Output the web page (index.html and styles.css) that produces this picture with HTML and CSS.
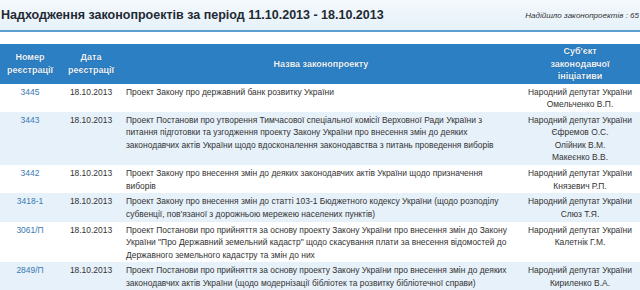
FILE: index.html
```html
<!DOCTYPE html>
<html lang="uk">
<head>
<meta charset="utf-8">
<title>Надходження законопроектів</title>
<link rel="stylesheet" href="styles.css">
</head>
<body>
<div class="page">
  <div class="titlebar">
    <h1 class="title">Надходження законопроектів за період 11.10.2013 - 18.10.2013</h1>
    <div class="count">Надійшло законопроектів : 65</div>
  </div>
  <table class="bills">
    <colgroup>
      <col class="c-num"><col class="c-date"><col class="c-name"><col class="c-subj">
    </colgroup>
    <thead>
      <tr>
        <th>Номер<br>реєстрації</th>
        <th>Дата<br>реєстрації</th>
        <th>Назва законопроекту</th>
        <th>Суб'єкт<br>законодавчої<br>ініціативи</th>
      </tr>
    </thead>
    <tbody>
      <tr>
        <td class="num"><a href="#">3445</a></td>
        <td class="date">18.10.2013</td>
        <td class="name">Проект Закону про державний банк розвитку України</td>
        <td class="subj">Народний депутат України<br>Омельченко В.П.</td>
      </tr>
      <tr class="alt">
        <td class="num"><a href="#">3443</a></td>
        <td class="date">18.10.2013</td>
        <td class="name">Проект Постанови про утворення Тимчасової спеціальної комісії Верховної Ради України з<br>питання підготовки та узгодження проекту Закону України про внесення змін до деяких<br>законодавчих актів України щодо вдосконалення законодавства з питань проведення виборів</td>
        <td class="subj">Народний депутат України<br>Єфремов О.С.<br>Олійник В.М.<br>Макеєнко В.В.</td>
      </tr>
      <tr>
        <td class="num"><a href="#">3442</a></td>
        <td class="date">18.10.2013</td>
        <td class="name">Проект Закону про внесення змін до деяких законодавчих актів України щодо призначення<br>виборів</td>
        <td class="subj">Народний депутат України<br>Князевич Р.П.</td>
      </tr>
      <tr class="alt">
        <td class="num"><a href="#">3418-1</a></td>
        <td class="date">18.10.2013</td>
        <td class="name">Проект Закону про внесення змін до статті 103-1 Бюджетного кодексу України (щодо розподілу<br>субвенції, пов'язаної з дорожньою мережею населених пунктів)</td>
        <td class="subj">Народний депутат України<br>Слюз Т.Я.</td>
      </tr>
      <tr>
        <td class="num"><a href="#">3061/П</a></td>
        <td class="date">18.10.2013</td>
        <td class="name">Проект Постанови про прийняття за основу проекту Закону України про внесення змін до Закону<br>України "Про Державний земельний кадастр" щодо скасування плати за внесення відомостей до<br>Державного земельного кадастру та змін до них</td>
        <td class="subj">Народний депутат України<br>Калетнік Г.М.</td>
      </tr>
      <tr class="alt">
        <td class="num"><a href="#">2849/П</a></td>
        <td class="date">18.10.2013</td>
        <td class="name">Проект Постанови про прийняття за основу проекту Закону України про внесення змін до деяких<br>законодавчих актів України (щодо модернізації бібліотек та розвитку бібліотечної справи)</td>
        <td class="subj">Народний депутат України<br>Кириленко В.А.</td>
      </tr>
    </tbody>
  </table>
</div>
</body>
</html>
```

FILE: styles.css
```css
html, body {
  margin: 0;
  padding: 0;
  background: #ffffff;
  overflow: hidden;
}
.page {
  width: 640px;
  font-family: "Liberation Sans", Arial, sans-serif;
  color: #333333;
}
.titlebar {
  display: flex;
  align-items: center;
  justify-content: space-between;
  height: 30px;
  background: linear-gradient(#f4f9fd, #e6f1f9);
  border-bottom: 2px solid #5c9fd2;
  white-space: nowrap;
  overflow: hidden;
}
.title {
  margin: 0 0 0 1px;
  font-size: 12.5px;
  font-weight: bold;
  color: #1f2a33;
}
.count {
  flex-shrink: 0;
  font-size: 8px;
  font-style: italic;
  color: #333;
  margin-right: 1px;
}
.bills {
  margin-top: 12px;
  width: 640px;
  border-collapse: collapse;
  table-layout: fixed;
  font-size: 8.45px;
  line-height: 12.5px;
}
.c-num { width: 60px; }
.c-date { width: 62px; }
.c-name { width: 398px; }
.c-subj { width: 120px; }
.bills th {
  background: #2b7fc2;
  color: #eaf4ff;
  font-weight: bold;
  font-size: 9px;
  line-height: 12.5px;
  text-shadow: 0 0 1px #124a7a;
  padding: 1px 0;
  height: 37px;
  text-align: center;
}
.bills td {
  padding: 2px 4px 1.3px;
  vertical-align: top;
  white-space: nowrap;
}
.bills tr.alt td {
  background: #e7f1fa;
}
.num, .date, .subj { text-align: center; }
.num a {
  color: #3a7ab2;
  text-decoration: none;
}
.name { text-align: left; }
```
